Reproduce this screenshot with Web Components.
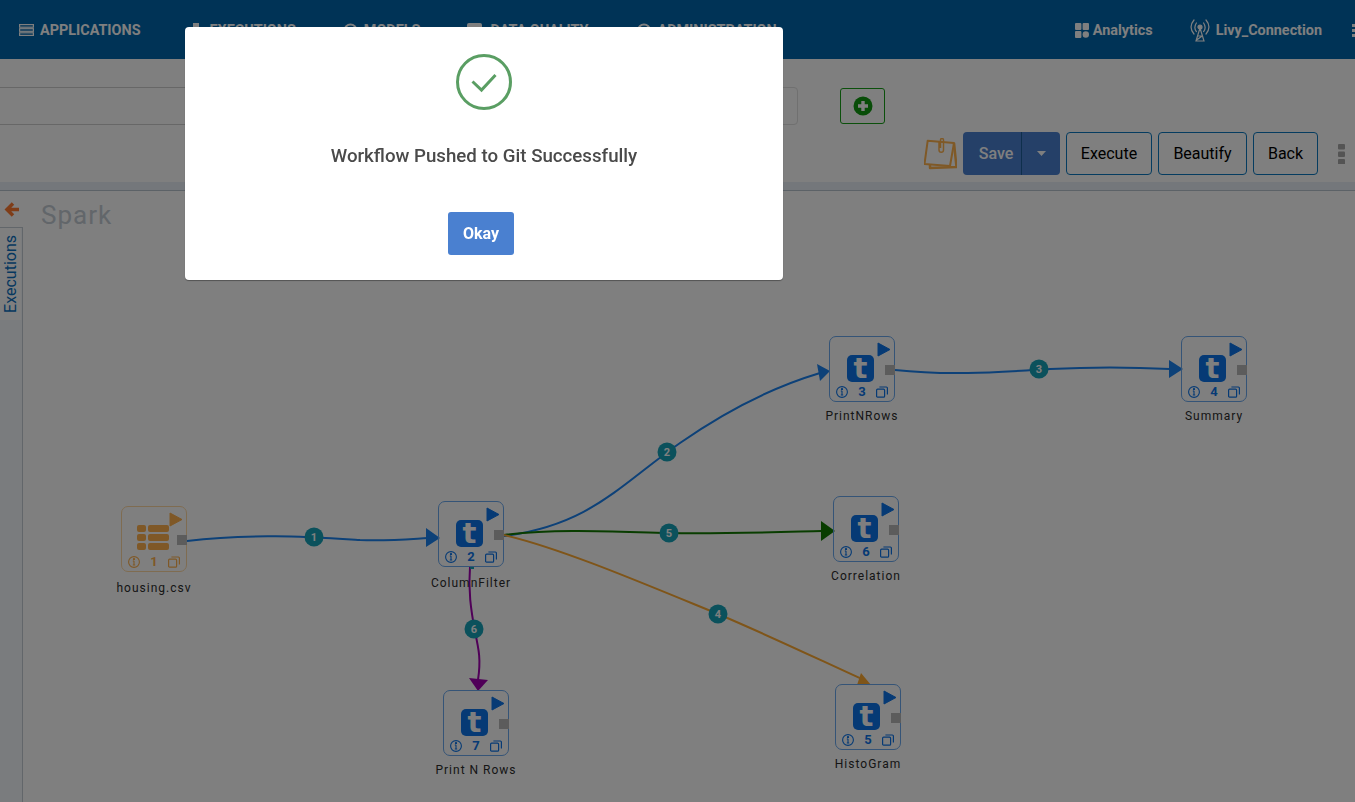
<!DOCTYPE html>
<html>
<head>
<meta charset="utf-8">
<title>Workflow</title>
<style>
  html, body { margin: 0; height: 100%; overflow: hidden; background: #fff; font-family: Roboto, "Liberation Sans", sans-serif; }
</style>
</head>
<body>
<app-shell>
  <nav-bar slot="nav"></nav-bar>
  <tool-bar slot="tools"></tool-bar>
  <flow-canvas slot="canvas"></flow-canvas>
</app-shell>
<success-modal message="Workflow Pushed to Git Successfully"></success-modal>

<script>
class AppShell extends HTMLElement {
  constructor() {
    super();
    this.attachShadow({ mode: 'open' });
    this.shadowRoot.innerHTML = `
      <style>
        :host { display: grid; grid-template-rows: 59px 132px 1fr; height: 802px; width: 1355px; overflow: hidden; }
      </style>
      <slot name="nav"></slot>
      <slot name="tools"></slot>
      <slot name="canvas"></slot>
    `;
  }
}

class NavBar extends HTMLElement {
  constructor() {
    super();
    this.attachShadow({ mode: 'open' });
    this.shadowRoot.innerHTML = `
      <style>
        :host { display: flex; align-items: center; box-sizing: border-box; padding-top: 1px; background: #0066ac; color: #fff; padding-left: 19px; overflow: hidden; white-space: nowrap; font: 700 14.4px Roboto, sans-serif; }
        .item { display: flex; align-items: center; gap: 6px; }
        .left { display: flex; gap: 47px; }
        .right { margin-left: auto; display: flex; align-items: center; margin-right: -12px; }
        svg { display: block; flex: none; }
        .analytics { margin-right: 37px; gap: 4px; }
        .livy { margin-right: 30px; }
      </style>
      <div class="left">
        <div class="item" style="margin-right:2px">
          <svg width="15" height="12" viewBox="0 0 15 12" fill="none" stroke="#fff" stroke-width="1.2"><rect x=".6" y=".6" width="13.8" height="2.6"/><rect x=".6" y="4.7" width="13.8" height="2.6"/><rect x=".6" y="8.8" width="13.8" height="2.6"/></svg>
          <span>APPLICATIONS</span>
        </div>
        <div class="item"><svg width="14" height="15" viewBox="0 0 14 15" fill="#fff"><rect x="3" y="0" width="6" height="15"/></svg><span>EXECUTIONS</span></div>
        <div class="item"><svg width="15" height="15" viewBox="0 0 15 15" fill="none" stroke="#fff" stroke-width="2"><circle cx="7.5" cy="7.5" r="6"/></svg><span>MODELS</span></div>
        <div class="item"><svg width="17" height="15" viewBox="0 0 17 15" fill="#fff"><rect width="15" height="15" rx="2"/></svg><span>DATA QUALITY</span></div>
        <div class="item"><svg width="16" height="15" viewBox="0 0 16 15" fill="none" stroke="#fff" stroke-width="2"><circle cx="8" cy="7.5" r="6"/></svg><span>ADMINISTRATION</span></div>
      </div>
      <div class="right">
        <div class="item analytics">
          <svg width="14" height="15" viewBox="0 0 14 15" fill="#fff"><rect width="6.4" height="7" rx="1"/><rect x="7.6" width="6.4" height="7" rx="1"/><rect y="8" width="6.4" height="7" rx="1"/><circle cx="10.8" cy="11.5" r="3.2"/></svg>
          <span>Analytics</span>
        </div>
        <div class="item livy">
          <svg width="20" height="24" viewBox="0 0 20 24" fill="none" stroke="#fff" stroke-width="1.2" stroke-linecap="round">
            <path d="M4 2C.6 6-.2 11 4 16M16 2c3.4 4 4.2 9 0 14M6.4 5c-2 3-2 6 0 8.6M13.6 5c2 3 2 6 0 8.6"/>
            <circle cx="10" cy="9" r="2" fill="#fff"/>
            <path d="M10 10l-4 13h8zM7.6 18h4.8M6.6 22l5.6-4"/>
          </svg>
          <span>Livy_Connection</span>
        </div>
        <svg width="15" height="13" viewBox="0 0 15 13" fill="#fff"><rect width="3" height="3"/><rect y="5" width="3" height="3"/><rect y="10" width="3" height="3"/><rect x="5" width="10" height="3"/><rect x="5" y="5" width="10" height="3"/><rect x="5" y="10" width="10" height="3"/></svg>
      </div>
    `;
  }
}

class ToolBar extends HTMLElement {
  constructor() {
    super();
    this.attachShadow({ mode: 'open' });
    this.shadowRoot.innerHTML = `
      <style>
        :host { display: flex; flex-direction: column; background: #fff; box-sizing: border-box; height: 132px; border-bottom: 1px solid #b8c4cf; font: 16px Roboto, sans-serif; overflow: hidden; }
        .inputs { display: flex; align-items: center; height: 38px; margin-top: 28px; margin-left: -20px; }
        .field { box-sizing: border-box; height: 38px; border: 1px solid #cfcfcf; background: #fff; }
        .f1 { width: 420px; }
        .f2 { width: 398px; border-radius: 4px; border-color: #e0e0e0; }
        .add { box-sizing: border-box; width: 45px; height: 36px; margin-left: 42px; border: 1px solid #17a017; border-radius: 3px; display: flex; align-items: center; justify-content: center; }
        .actions { display: flex; align-items: center; justify-content: flex-end; height: 43px; margin-top: 7px; padding-right: 10px; }
        .note { margin-right: 6px; display: block; }
        .btn { box-sizing: border-box; height: 43px; display: flex; align-items: center; justify-content: center; border: 1px solid #0a78c0; border-radius: 4px; color: #000; margin-left: 6px; background: #fff; }
        .save { box-sizing: border-box; display: flex; width: 97px; height: 43px; background: #4a80d0; border-radius: 4px; color: #fff; font-weight: 500; }
        .save span { box-sizing: border-box; width: 59px; padding-left: 8px; display: flex; align-items: center; justify-content: center; border-right: 1px solid #1c5f98; }
        .save i { flex: 1; display: flex; align-items: center; justify-content: center; }
        .more { display: block; margin-left: 20px; }
        .strip { margin-top: auto; height: 8px; background: #e8eff6; }
      </style>
      <div class="inputs">
        <div class="field f1"></div>
        <div class="field f2"></div>
        <div class="add">
          <svg width="20" height="20" viewBox="0 0 20 20"><circle cx="10" cy="10" r="9.5" fill="#109a10"/><path d="M10 5v10M5 10h10" stroke="#fff" stroke-width="3.4"/></svg>
        </div>
      </div>
      <div class="actions">
        <svg class="note" width="33" height="32" viewBox="0 0 33 32" fill="none" stroke="#ffb24f" stroke-width="2" stroke-linejoin="round">
          <path d="M3.700 2.700L30 5l-4 23-25.500-2z"/>
          <path d="M30 5l2.500 24-26.500 1 0-3" stroke-width="2.500"/>
          <path d="M15 4v8c0 3 4.500 3 4.500 0V2c0-2-3-2-3 0v8" stroke-width="1.500"/>
        </svg>
        <div class="save"><span>Save</span><i><svg width="9" height="5" viewBox="0 0 9 5" fill="#fff"><path d="M0 0h9L4.500 5z"/></svg></i></div>
        <div class="btn" style="width:86px">Execute</div>
        <div class="btn" style="width:89px">Beautify</div>
        <div class="btn" style="width:65px">Back</div>
        <svg class="more" width="7" height="20" viewBox="0 0 7 20" fill="#a8a8a8"><rect width="7" height="5.500" rx="1"/><rect y="7.500" width="7" height="5.500" rx="1"/><rect y="15" width="7" height="5.500" rx="1"/></svg>
      </div>
      <div class="strip"></div>
    `;
  }
}

class FlowNode extends HTMLElement {
  connectedCallback() {
    const kind = this.getAttribute('kind') || 'tile';
    const color = kind === 'csv' ? '#ffb14e' : '#0c75ea';
    const border = kind === 'csv' ? '#ffd9a3' : '#6aa8ee';
    const glyph = kind === 'csv'
      ? `<div class="rows">${'<b></b><u></u>'.repeat(3)}</div>`
      : `<div class="tile">t</div>`;
    const labelGap = this.getAttribute('label-gap') || 7;
    this.attachShadow({ mode: 'open' });
    this.shadowRoot.innerHTML = `
      <style>
        :host { position: absolute; left: ${this.getAttribute('x')}px; top: ${this.getAttribute('y')}px; width: 66px; display: flex; flex-direction: column; align-items: center; }
        .box { box-sizing: border-box; position: relative; width: 66px; height: 66px; border: 1px solid ${border}; border-radius: 7px; padding: ${kind === 'csv' ? '18px 0 0 15px' : '18px 0 0 17px'}; color: ${color}; }
        .tile { width: 27px; height: 27px; border-radius: 5px; background: ${color}; color: #fff; font: 700 29px/27px "DejaVu Sans", sans-serif; text-align: center; }
        .rows { display: grid; grid-template-columns: 9px 21px; grid-auto-rows: 6.500px; gap: 2.500px 2px; }
        .rows b, .rows u { background: ${color}; border-radius: 2px; display: block; }
        .play { position: absolute; right: 3px; top: 5px; display: block; }
        .port { position: absolute; right: -1px; top: 28px; width: 10px; height: 10px; background: #b8b8b8; }
        .foot { position: absolute; left: 6px; right: 6px; bottom: 3px; height: 13px; display: flex; align-items: center; justify-content: space-between; font: 700 13px/13px Roboto, sans-serif; }
        .label { margin-top: ${labelGap}px; font: 12px/15px Roboto, sans-serif; letter-spacing: 1px; color: #2c2c2c; white-space: nowrap; }
      </style>
      <div class="box">
        <svg class="play" width="14" height="15" viewBox="0 0 14 15" fill="${color}" stroke="${color}" stroke-width="1" stroke-linejoin="round"><path d="M1 1l12 6.500-12 6.500z"/></svg>
        ${glyph}
        <div class="port"></div>
        <div class="foot">
          <svg width="12" height="12" viewBox="0 0 12 12" fill="none" stroke="${color}" stroke-width="1.100"><circle cx="6" cy="6" r="5.400"/><path d="M6 5v4M4.800 9h2.400M4.800 5H6"/><circle cx="6" cy="3.200" r=".6" fill="${color}"/></svg>
          <span>${this.getAttribute('num')}</span>
          <svg width="12" height="12" viewBox="0 0 12 12" fill="none" stroke="${color}" stroke-width="1.200"><rect x=".6" y="3.200" width="8" height="8" rx="1"/><path d="M3.400 1h7a1 1 0 0 1 1 1v6.500"/></svg>
        </div>
      </div>
      <div class="label">${this.getAttribute('label')}</div>
    `;
  }
}

class FlowCanvas extends HTMLElement {
  constructor() {
    super();
    // edges are written in page coordinates, the canvas starts at y=191
    const edges = [
      { c: '#1a82f0', d: 'M187 541C250 533 310 537 360 540C390 541 410 539 428 538', a: '426,528 440,538 426,547' },
      { c: '#1a82f0', d: 'M504 536C590 525 620 485 680 443C730 408 780 385 820 373', a: '817,364 830,371 820,381' },
      { c: '#1a82f0', d: 'M895 370C950 376 1000 372 1050 369C1090 367 1130 367 1170 369', a: '1169,360 1183,369 1169,378' },
      { c: '#127a00', d: 'M504 535C560 528 620 532 669 533C720 534 780 532 822 531', a: '821,521 835,531 821,541' },
      { c: '#ffaa33', d: 'M504 535C560 548 640 582 718 614C770 636 820 660 864 680', a: '861,673 857,685 871,685' },
      { c: '#a000b0', d: 'M470 567C468 590 471 610 475 632C479 650 481 660 478 680', a: '469,678 488,680 478,691' }
    ];
    const badges = [[314, 537, 1], [667, 452, 2], [1039, 369, 3], [718, 614, 4], [669, 533, 5], [474, 629, 6]];
    const off = 191;
    this.attachShadow({ mode: 'open' });
    this.shadowRoot.innerHTML = `
      <style>
        :host { display: block; position: relative; overflow: hidden; background: #fff; font-family: Roboto, sans-serif; }
        .rail { position: absolute; left: 0; top: 0; bottom: 0; width: 22px; background: #f4f8fc; border-right: 1px solid #c4ccd4; }
        .back { position: absolute; left: 0; top: 0; width: 23px; height: 37px; background: #fff; border-bottom: 1px solid #c4ccd4; display: flex; justify-content: center; padding-top: 11px; box-sizing: border-box; }
        .tab { position: absolute; left: 0; top: 37px; width: 21px; height: 92px; background: #fff; display: flex; align-items: center; justify-content: center; }
        .tab span { writing-mode: vertical-rl; transform: rotate(180deg); font-size: 16px; line-height: 20px; color: #0c70c0; white-space: nowrap; }
        h1 { margin: 0; position: absolute; left: 41px; top: 9px; font: 400 26px/30px Roboto, sans-serif; letter-spacing: 1px; color: #c4ccd4; }
        svg.edges { position: absolute; left: 0; top: -${off}px; width: 1355px; height: 802px; }
        .badge { font: 700 11px Roboto, sans-serif; fill: #fff; text-anchor: middle; }
      </style>
      <div class="rail"></div>
      <div class="back"><svg width="16" height="15" viewBox="0 0 16 15" fill="none" stroke="#ff7a30" stroke-width="3.500"><path d="M15 7.500H3M9 1.500L3 7.500l6 6"/></svg></div>
      <div class="tab"><span>Executions</span></div>
      <h1>Spark</h1>
      <svg class="edges" viewBox="0 0 1355 802">
        ${edges.map(e => `<path d="${e.d}" fill="none" stroke="${e.c}" stroke-width="2"/><polygon points="${e.a}" fill="${e.c}"/>`).join('')}
        <rect x="470" y="566" width="4" height="3" fill="#17a2b8"/>
        ${badges.map(b => `<circle cx="${b[0]}" cy="${b[1]}" r="9.500" fill="#17a2b8"/><text class="badge" x="${b[0]}" y="${b[1] + 4}">${b[2]}</text>`).join('')}
      </svg>
      <flow-node kind="csv" x="121" y="315" num="1" label="housing.csv" label-gap="9"></flow-node>
      <flow-node x="438" y="310" num="2" label="ColumnFilter" label-gap="9"></flow-node>
      <flow-node x="829" y="145" num="3" label="PrintNRows"></flow-node>
      <flow-node x="1181" y="145" num="4" label="Summary"></flow-node>
      <flow-node x="833" y="305" num="6" label="Correlation"></flow-node>
      <flow-node x="835" y="493" num="5" label="HistoGram"></flow-node>
      <flow-node x="443" y="499" num="7" label="Print N Rows"></flow-node>
    `;
  }
}

class SuccessModal extends HTMLElement {
  connectedCallback() {
    this.attachShadow({ mode: 'open' });
    this.shadowRoot.innerHTML = `
      <style>
        :host { position: fixed; inset: 0; display: block; background: rgba(0,0,0,.5); font-family: Roboto, sans-serif; }
        .dialog { position: absolute; left: 185px; top: 27px; box-sizing: border-box; width: 598px; height: 253px; background: #fff; border-radius: 4px; box-shadow: 0 1px 1px rgba(0,0,0,.35); display: flex; flex-direction: column; align-items: center; padding-top: 27px; }
        .msg { margin-top: 34px; font: 500 18.7px/24px Roboto, sans-serif; color: #4a4a4a; }
        button { margin: 44px 6px 0 0; width: 66px; height: 43px; border: 0; border-radius: 3px; background: #4a80d0; color: #fff; font: 700 16px Roboto, sans-serif; padding: 0; }
        svg { display: block; }
      </style>
      <div class="dialog">
        <svg width="56" height="56" viewBox="0 0 56 56" fill="none" stroke="#5a9e63"><circle cx="28" cy="28" r="26.500" stroke-width="3"/><path d="M16.500 27.500l9 8.500L39.500 21" stroke-width="3"/></svg>
        <div class="msg">${this.getAttribute('message')}</div>
        <button>Okay</button>
      </div>
    `;
  }
}

customElements.define('flow-node', FlowNode);
customElements.define('app-shell', AppShell);
customElements.define('nav-bar', NavBar);
customElements.define('tool-bar', ToolBar);
customElements.define('flow-canvas', FlowCanvas);
customElements.define('success-modal', SuccessModal);
</script>
</body>
</html>
